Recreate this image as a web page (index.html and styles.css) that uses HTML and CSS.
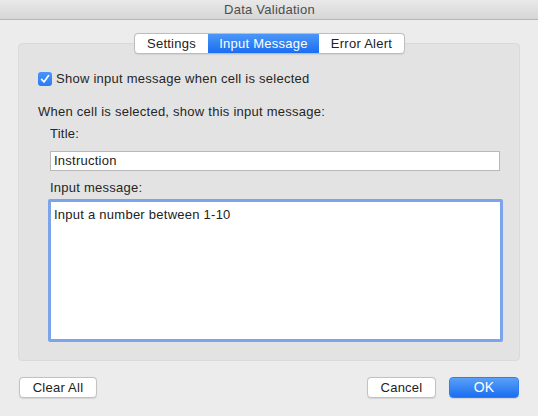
FILE: index.html
```html
<!DOCTYPE html>
<html>
<head>
<meta charset="utf-8">
<link rel="stylesheet" href="styles.css">
</head>
<body>
<div class="window">
  <div class="titlebar">Data Validation</div>
  <div class="content">
    <div class="tabs">
      <div class="tab tab-first">Settings</div>
      <div class="tab tab-active">Input Message</div>
      <div class="tab tab-last">Error Alert</div>
    </div>
    <div class="group">
      <div class="check-row">
        <span class="checkbox">
          <svg width="14" height="14" viewBox="0 0 14 14"><path d="M3.6 7.4 L6 9.9 L10.6 3.6" fill="none" stroke="#fff" stroke-width="1.7" stroke-linecap="round" stroke-linejoin="round"/></svg>
        </span>
        <span class="label">Show input message when cell is selected</span>
      </div>
      <div class="heading">When cell is selected, show this input message:</div>
      <div class="field-label label-title">Title:</div>
      <div class="textfield">Instruction</div>
      <div class="field-label label-msg">Input message:</div>
      <div class="textarea">Input a number between 1-10</div>
    </div>
    <div class="buttons">
      <div class="btn btn-clear">Clear All</div>
      <div class="spacer"></div>
      <div class="btn btn-cancel">Cancel</div>
      <div class="btn btn-ok">OK</div>
    </div>
  </div>
</div>
</body>
</html>
```

FILE: styles.css
```css
* { box-sizing: border-box; }
html, body {
  margin: 0;
  padding: 0;
  width: 538px;
  height: 416px;
  overflow: hidden;
  background: #ececec;
  font-family: "Liberation Sans", Arial, sans-serif;
  font-size: 13px;
  letter-spacing: 0.25px;
  color: #262626;
}
.window {
  display: flex;
  flex-direction: column;
  height: 416px;
}
.titlebar {
  height: 20px;
  line-height: 19px;
  text-align: center;
  color: #4d4d4d;
  background: linear-gradient(#e9e9e9, #d6d6d6);
  border-bottom: 1px solid #b6b6b6;
  padding-left: 1px;
}
.content {
  padding: 13px 18px 0 18px;
  display: flex;
  flex-direction: column;
}
.tabs {
  position: relative;
  z-index: 2;
  display: flex;
  align-self: center;
  height: 21px;
  margin-left: 1px;
  background: #fff;
  border: 1px solid #bdbdbd;
  border-radius: 4px;
  box-shadow: 0 0.5px 1px rgba(0,0,0,0.08);
  overflow: hidden;
}
.tab {
  line-height: 19px;
  text-align: center;
  color: #222;
}
.tab-first { width: 73px; }
.tab-active {
  width: 111px;
  color: #fff;
  background: linear-gradient(#4c97f8, #1a6ef0);
}
.tab-last { width: 85px; }
.group {
  margin-top: -11px;
  height: 318px;
  background: #e3e3e3;
  border: 1px solid #dadada;
  border-radius: 4px;
  padding: 28px 0 0 19px;
  display: flex;
  flex-direction: column;
}
.check-row {
  display: flex;
  align-items: center;
  height: 14px;
}
.checkbox {
  width: 14px;
  height: 14px;
  border-radius: 3px;
  background: linear-gradient(#4a94f8, #2b7bf3);
  display: flex;
}
.label {
  margin-left: 4px;
  line-height: 14px;
}
.heading {
  margin-top: 18px;
  line-height: 16px;
}
.field-label {
  margin-left: 12px;
  line-height: 16px;
}
.label-title { margin-top: 6px; }
.textfield {
  margin-top: 9px;
  margin-left: 12px;
  width: 450px;
  height: 20px;
  background: #fff;
  border: 1px solid #b9b9b9;
  padding-left: 3px;
  line-height: 18px;
  color: #222;
}
.label-msg { margin-top: 9px; }
.textarea {
  margin-top: 3px;
  margin-left: 10px;
  width: 455px;
  height: 143px;
  background: #fff;
  border: 3px solid #7ca4ea;
  border-radius: 2px;
  padding: 5px 3px 0 3px;
  line-height: 16px;
  color: #222;
}
.buttons {
  display: flex;
  margin-top: 16px;
  margin-left: 1px;
}
.spacer { flex: 1; }
.btn {
  height: 21px;
  line-height: 19px;
  text-align: center;
  background: #fff;
  border: 1px solid #c2c2c2;
  border-radius: 4px;
  box-shadow: 0 0.5px 1px rgba(0,0,0,0.1);
  color: #222;
}
.btn-clear { width: 78px; }
.btn-cancel { width: 69px; margin-right: 13px; }
.btn-ok {
  width: 70px;
  margin-right: 1px;
  color: #fff;
  border-color: #2f7ef2;
  background: linear-gradient(#5aa0f9, #1a6ef0);
  font-size: 14px;
}
```
